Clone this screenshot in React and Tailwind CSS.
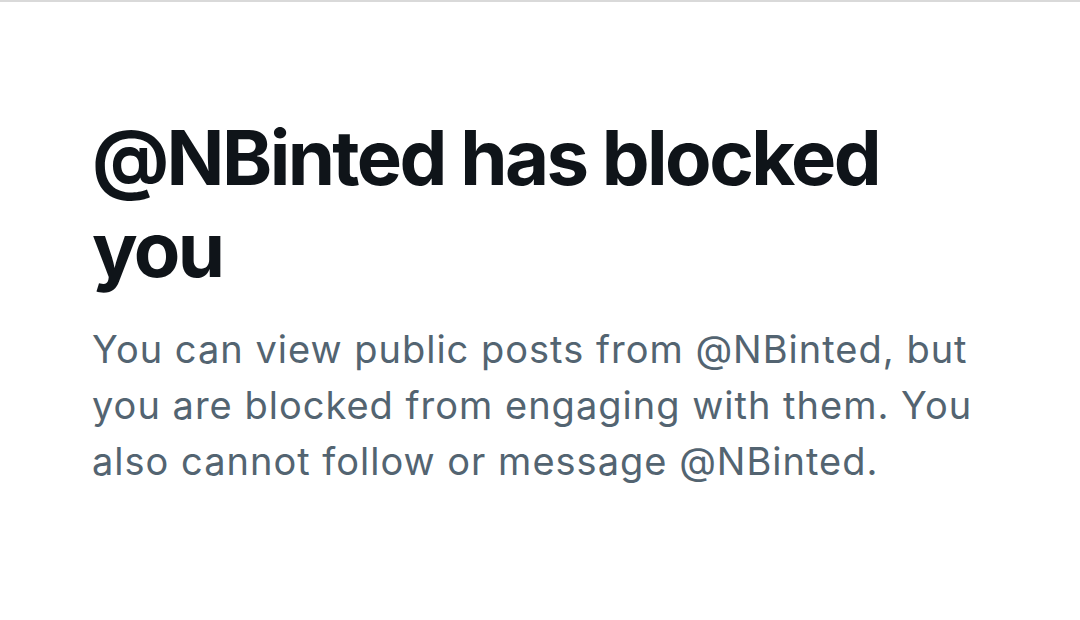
import React from 'react';

const App = () => {
  return (
    <div className="w-[1080px] h-[620px] bg-white border-t-2 border-[#d9d9d9] overflow-hidden" style={{ fontFamily: 'Inter, "Noto Sans", sans-serif' }}>
      <div className="pl-[92px] pt-[109px] w-[1000px]">
        <h1 className="text-[76px] leading-[92px] font-bold tracking-[-2.6px] text-[#0f1419]">
          @NBinted has blocked you
        </h1>
        <p className="mt-[26px] text-[38px] leading-[56px] tracking-[1px] text-[#536471]">
          You can view public posts from @NBinted, but you are blocked from engaging with them. You also cannot follow or message @NBinted.
        </p>
      </div>
    </div>
  );
};

export default App;
